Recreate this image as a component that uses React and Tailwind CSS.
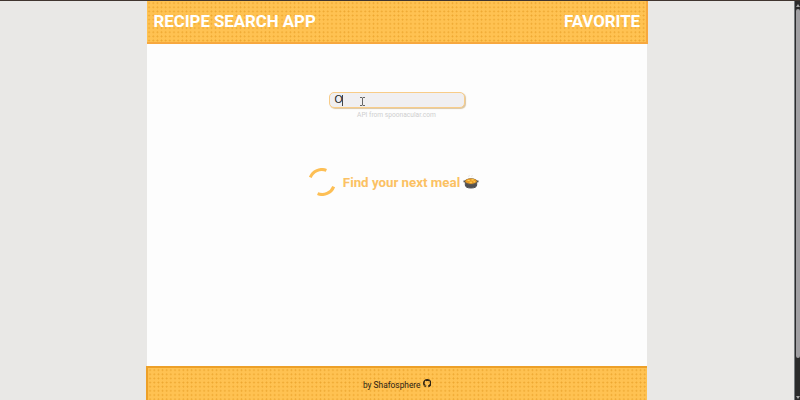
import { BsGithub } from "react-icons/bs";

const dots =
  "bg-[#ffc252] bg-[radial-gradient(circle_at_center,#eda730_0.6px,transparent_1.2px)] bg-[size:4.17px_4.17px]";

function Header() {
  return (
    <header
      className={`${dots} -mr-px flex h-[43px] shrink-0 items-center justify-between border-r-2 border-b-2 border-[#f7a83f] pt-px pr-[6px] pl-[6.5px] text-[16.8px] font-bold text-white`}
    >
      <h1 className="whitespace-nowrap">RECIPE SEARCH APP</h1>
      <a className="whitespace-nowrap">FAVORITE</a>
    </header>
  );
}

function PotIcon() {
  return (
    <svg className="ml-[3px] h-4 w-4" viewBox="0 0 16 16" fill="none">
      <path d="M6 3c-1-1 1-1 0-2M9 3c-1-1 1-1 0-2" stroke="#dedede" strokeWidth=".7" />
      <path d="M0.5 7.4h15" stroke="#505052" strokeWidth="1.8" />
      <path d="M2.3 8v3c0 2 2 3 5.7 3s5.7-1 5.7-3V8" fill="#505052" stroke="#505052" />
      <ellipse cx="8" cy="7.4" rx="6.4" ry="3.2" fill="#68604f" />
      <ellipse cx="8" cy="7.2" rx="5.6" ry="2.7" fill="#e89a24" />
      <path d="M4.5 6.5h2.2M8.5 5.9h2.2M6.5 8.3h2.5M10.5 7.8h1.5" stroke="#ffd45c" strokeWidth="1.1" />
    </svg>
  );
}

function Loader() {
  return (
    <svg className="mr-[7px] h-7 w-7" viewBox="0 0 28 28" fill="none" stroke="#fdbf55" strokeWidth="3">
      <path d="M2.3 9.4A12.3 12.3 0 0 1 18.4 2.4" />
      <path d="M25.7 18.6A12.3 12.3 0 0 1 9.6 25.6" />
    </svg>
  );
}

function Main() {
  return (
    <main className="flex flex-1 flex-col items-center bg-[#fdfdfd] pt-12">
      <div className="relative mr-px flex h-[16px] w-[136px] items-center rounded-[5px] border border-[#f8cc88] bg-[#f0eff1] pl-[5px] text-[10.5px] text-[#222] shadow-[1px_1px_1px_#d9c5a3]">
        <span className="font-['Liberation_Sans',sans-serif]">O</span>
        <span className="-ml-px h-[11px] w-px bg-[#444]" />
        <svg className="absolute top-1 left-[29px] h-[9px] w-[7px]" viewBox="0 0 7 9" fill="none" stroke="#666">
          <path d="M1 .5h2l.5.5.5-.5h2M3.5 1v7M1 8.5h2l.5-.5.5.5h2" />
        </svg>
      </div>
      <p className="mt-[3px] mr-px text-[6.65px] leading-[9px] text-[#cfcfcf]">API from spoonacular.com</p>
      <div className="mt-[48px] flex items-center pr-[7px]">
        <Loader />
        <h2 className="pt-px text-[13.3px] font-bold whitespace-nowrap text-[#fbc163]">Find your next meal</h2>
        <PotIcon />
      </div>
    </main>
  );
}

export default function App() {
  return (
    <div className="flex h-[400px] w-[800px] flex-col overflow-hidden bg-[#e9e8e6] font-['Roboto',sans-serif]">
      <div className="h-px shrink-0 bg-[#40352f]" />
      <div className="flex min-h-0 flex-1 justify-between">
        <div className="ml-[147px] flex w-[500px] flex-col">
          <Header />
          <Main />
          <footer
            className={`${dots} -ml-px flex h-[34px] shrink-0 items-center justify-center border-t-2 border-l-2 border-[#eda028] pt-[2px] pr-px text-[8.35px] text-[#2b2112]`}
          >
            by Shafosphere
            <BsGithub className="mb-[3px] ml-[2px] h-[8.5px] w-[8.5px]" />
          </footer>
        </div>
        <div className="flex w-[6px] flex-col items-center border-l border-[#777c80] bg-[#2b2b2b]">
          <svg className="mt-[3px] h-[3px] w-1" viewBox="0 0 4 3"><path d="M2 0 4 3H0z" fill="#a6a6a6" /></svg>
          <div className="mt-[2px] h-[349px] w-1 rounded-full bg-[#a09fa2]" />
          <svg className="mt-[38px] h-[3px] w-1" viewBox="0 0 4 3"><path d="M0 0h4L2 3z" fill="#a6a6a6" /></svg>
        </div>
      </div>
    </div>
  );
}
